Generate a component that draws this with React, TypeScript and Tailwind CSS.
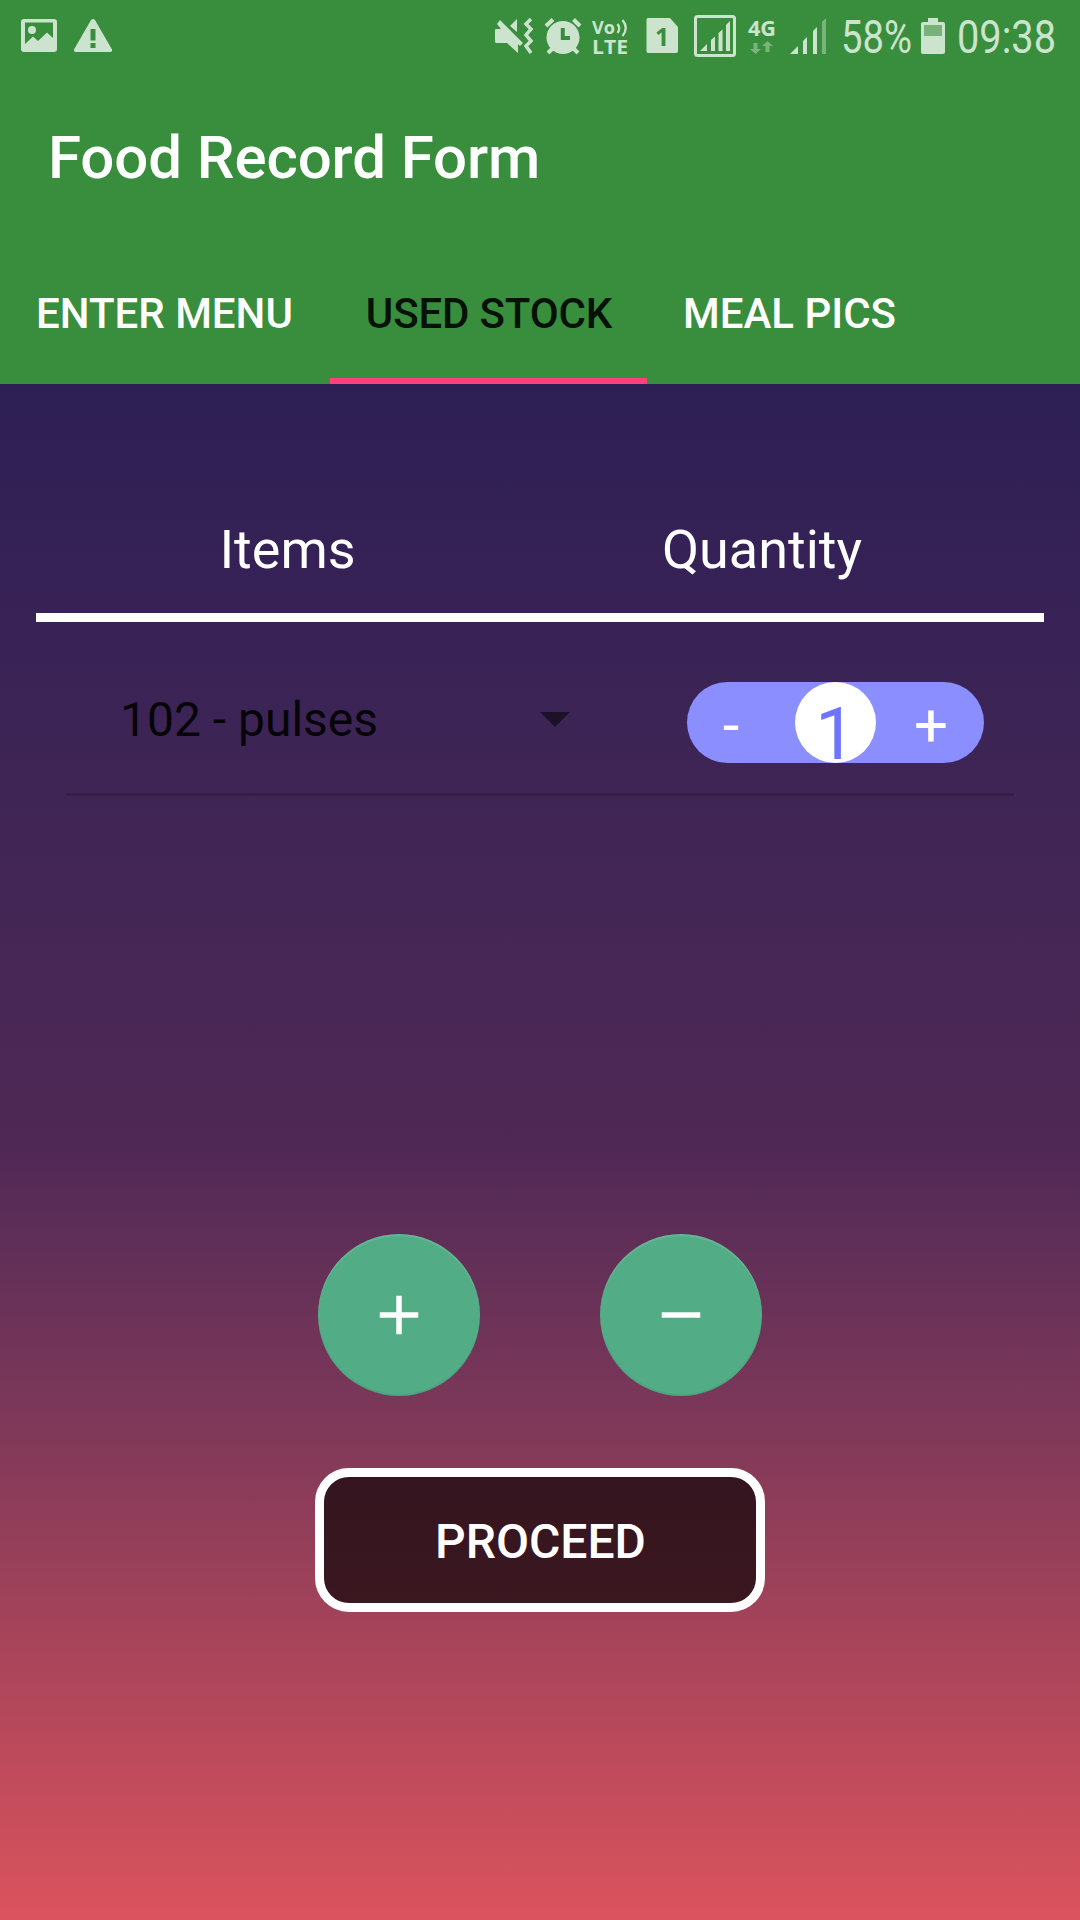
import React from "react";

const FG = "#cce3cd";

function StatusBar() {
  return (
    <div className="flex h-[72px] w-full items-center justify-between pl-5 text-[#cce3cd]">
      <div className="flex items-center gap-[17px]">
        <svg width="36" height="36" viewBox="0 0 36 36" fill={FG} className="ml-px">
          <path
            fillRule="evenodd"
            d="M3 1H33Q36 1 36 4V31Q36 34 33 34H3Q0 34 0 31V4Q0 1 3 1ZM4 4.500V26L12 18.500L17 23L26 14.500L32 20V4.500Z"
          />
          <circle cx="11" cy="12" r="4" />
        </svg>
        <svg width="38" height="36" viewBox="0 0 38 36" fill={FG}>
          <path
            fillRule="evenodd"
            d="M17 2Q19 0 21 2L38 31.500Q38.500 34 36 34H2Q-.500 34 0 31.500ZM16.500 11V22.500H21.500V11ZM16.500 25V30H21.500V25Z"
          />
        </svg>
      </div>
      <svg width="610" height="72" viewBox="470 0 610 72" fill={FG} className="shrink-0 overflow-visible">
        <path d="M495 30Q495 29 496 29H501L497 24L500 20L523 43L520 46L518 44V53L507 43H496.500Q495 43 495 41.500Z" />
        <path d="M517 19V32L510 26Z" />
        <path d="M532 19L527 24L532 29L527 35L532 41L527 46L532 53" transform="translate(-1 0)" fill="none" stroke={FG} strokeWidth="3.500" />
        <circle cx="563" cy="37.500" r="16.500" />
        <path d="M546 26L553 19.500M573.500 19.500L580 26M548 53L554 47M578 53L572 47" stroke={FG} strokeWidth="4" />
        <path d="M562.800 28V38H570" fill="none" stroke="#388e3c" strokeWidth="4" />
        <text x="592" y="33.500" fontFamily="Open Sans" fontWeight="700" fontSize="18.500" textLength="23" lengthAdjust="spacingAndGlyphs">Vo</text>
        <path d="M617.500 24Q621 28.500 617.500 33M622.500 20Q629 28 622.500 36" fill="none" stroke={FG} strokeWidth="2.300" />
        <text x="592" y="53.500" fontFamily="Open Sans" fontWeight="700" fontSize="19.600" textLength="36" lengthAdjust="spacingAndGlyphs">LTE</text>
        <path d="M648 18H670L678 27V51Q678 53 676 53H648Q646.500 53 646.500 51V20Q646.500 18 648 18Z" />
        <text x="655" y="46" fontFamily="Open Sans" fontWeight="700" fontSize="25" fill="#388e3c">1</text>
        <rect x="695.500" y="16.500" width="39" height="39" rx="2" fill="none" stroke={FG} strokeWidth="3" />
        <path d="M700 51L707 44V51ZM711 40L715 36.500V51H711ZM718.500 33L722.500 29.500V51H718.500ZM726 25L730 21V51H726Z" />
        <text x="748" y="36" fontFamily="Open Sans" fontWeight="700" fontSize="21.500" textLength="28" lengthAdjust="spacingAndGlyphs">4G</text>
        <path d="M753.500 43H757.500V49H761L755.500 54L750 49H753.500ZM765.500 52H769.500V46H773L767.500 41L762 46H765.500Z" opacity=".45" />
        <path d="M790 54L798 46V54ZM803 41L807 37V54H803ZM813 31L817 27V54H813Z" />
        <path d="M822 22L826 18V54H822Z" opacity=".45" />
        <text x="841" y="53.300" fontFamily="Roboto" fontSize="45.500" textLength="71" lengthAdjust="spacingAndGlyphs">58%</text>
        <path d="M928 18H938V22H943Q945 22 945 24V52Q945 54 943 54H923Q921 54 921 52V24Q921 22 923 22H928Z" />
        <rect x="924" y="25" width="18" height="11" fill="#78b27b" />
        <text x="957" y="53.300" fontFamily="Roboto" fontSize="45.500" textLength="99" lengthAdjust="spacingAndGlyphs">09:38</text>
      </svg>
    </div>
  );
}

function Tab({ label, active = false }: { label: string; active?: boolean }) {
  return (
    <div
      className={
        active
          ? "flex h-36 w-[317px] items-center justify-center border-b-[6px] border-[#ff4081] pt-2.5 pl-px tracking-[-0.15px] text-[#061107]"
          : "flex h-36 min-w-[330px] items-center px-9 pt-1 text-white"
      }
    >
      {label}
    </div>
  );
}

function Stepper() {
  return (
    <div className="flex h-[81px] w-[297px] items-center justify-between rounded-full bg-[#8b8eff] text-[60px] leading-none text-white">
      <span className="flex w-[108px] justify-center pt-1.5 pr-5">-</span>
      <span className="flex h-[81px] w-[81px] justify-center rounded-full bg-white pt-[17px] text-[72px] text-[#6f74ff]">
        1
      </span>
      <span className="flex w-[108px] justify-center pt-1.5 pl-0.5">+</span>
    </div>
  );
}

function RoundButton({ plus = false }: { plus?: boolean }) {
  return (
    <button className="flex size-[162px] items-center justify-center rounded-full bg-[#52ad87] shadow-[inset_0_2px_1px_rgba(255,255,255,0.12),inset_0_-2px_1px_rgba(0,0,0,0.06)]">
      <svg width="66" height="66" viewBox="0 0 24 24" fill="#fff">
        <path d={plus ? "M19 13h-6v6h-2v-6H5v-2h6V5h2v6h6z" : "M19 13H5v-2h14z"} />
      </svg>
    </button>
  );
}

export default function App() {
  return (
    <div className="flex h-[1920px] w-[1080px] flex-col overflow-hidden font-['Roboto',sans-serif]">
      <header className="flex h-96 flex-col bg-[#388e3c]">
        <StatusBar />
        <h1 className="flex h-[168px] items-center pt-[3px] pl-12 text-[60px] leading-none font-medium tracking-[-0.1px] text-white">
          Food Record Form
        </h1>
        <nav className="flex text-[42px] leading-none font-medium">
          <Tab label="ENTER MENU" />
          <Tab label="USED STOCK" active />
          <Tab label="MEAL PICS" />
        </nav>
      </header>
      <main className="flex grow flex-col items-center bg-[linear-gradient(to_bottom,#2d1f54_0%,#382256_15.200%,#3e2555_26%,#4f2855_49.500%,#5a2d57_54%,#883b59_71%,#db535d_100%)]">
        <div className="flex h-[238px] w-[1008px] items-center border-b-[9px] border-white pt-[102px] text-[54px] leading-none text-white">
          <span className="w-[503px] text-center">Items</span>
          <span className="w-[446px] text-center">Quantity</span>
        </div>
        <div className="flex h-[174px] w-[948px] border-b-[3px] border-black/15 pt-[60px] pr-[30px] pl-[54px]">
          <div className="flex h-[75px] grow items-center justify-between pr-[117px] text-[48px] leading-none text-[#060409]">
            <span>102 - pulses</span>
            <svg width="30" height="15" viewBox="0 0 30 15" fill="#1c1128">
              <path d="M0 0H30L15 15Z" />
            </svg>
          </div>
          <Stepper />
        </div>
        <div className="mt-[438px] flex gap-[120px]">
          <RoundButton plus />
          <RoundButton />
        </div>
        <button className="mt-[72px] flex h-36 w-[450px] items-center justify-center rounded-[34px] border-[9px] border-white bg-[linear-gradient(#34151f,#3b1720)] pt-[3px] pl-px text-[48px] leading-none font-medium text-white">
          PROCEED
        </button>
      </main>
    </div>
  );
}
